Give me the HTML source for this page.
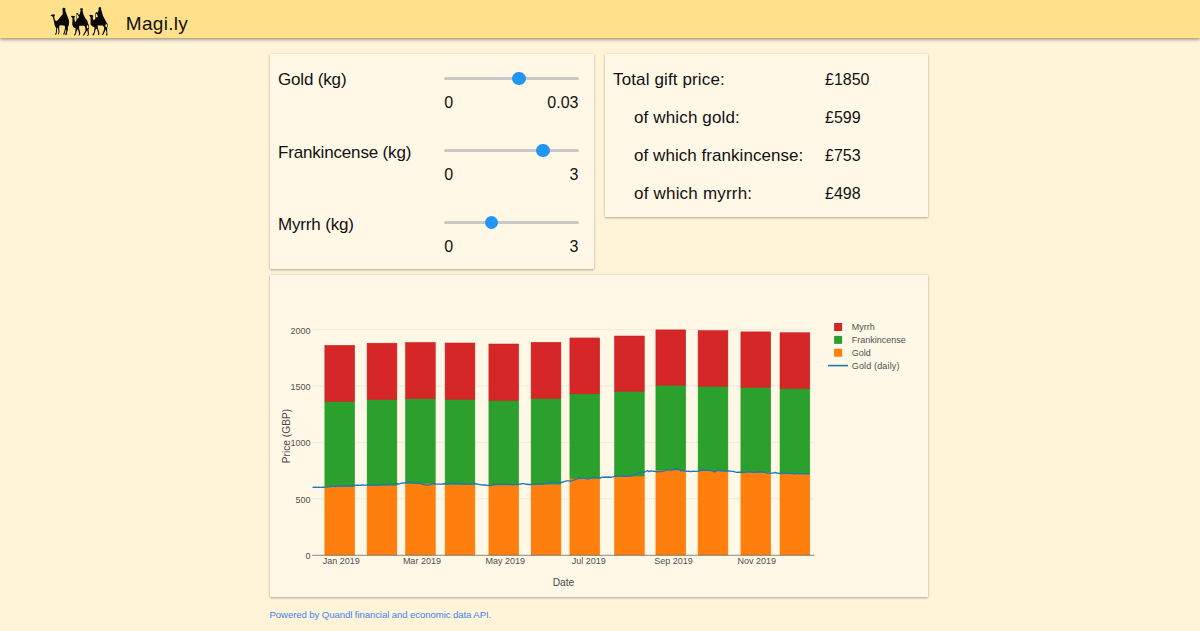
<!DOCTYPE html>
<html><head><meta charset="utf-8"><title>Magi.ly</title>
<style>
html,body{margin:0;padding:0}
body{width:1200px;height:631px;overflow:hidden;background:#fff4d8;font-family:"Liberation Sans",sans-serif;color:#111;position:relative}
.hdr{position:absolute;left:0;top:0;width:1200px;height:38px;background:#ffe18c;box-shadow:0 1px 3px rgba(0,0,0,.35),0 2px 5px rgba(0,0,0,.15)}
.brand{position:absolute;left:125.8px;top:0;height:38px;line-height:48px;font-size:19px;letter-spacing:.3px;color:#111;white-space:nowrap}
.card{position:absolute;background:#fff8e6;box-shadow:0 1px 2px rgba(0,0,0,.27),0 0 3px rgba(0,0,0,.09);border-radius:0}
.lbl{position:absolute;font-size:17px;line-height:20px;white-space:nowrap;color:#111}
.num{position:absolute;font-size:16px;line-height:20px;white-space:nowrap;color:#111}
.track{position:absolute;left:444px;width:135px;height:3px;border-radius:2px;background:#c8c8c6}
.thumb{position:absolute;width:13.4px;height:13.4px;border-radius:50%;background:#2196f3}
.foot{position:absolute;left:269.5px;top:608px;font-size:9.6px;letter-spacing:-.09px;line-height:14px;color:#4285f4;white-space:nowrap;text-decoration:none}
svg text.t{font-family:"Liberation Sans",sans-serif;font-size:9px;fill:#505050}
svg text.a{font-family:"Liberation Sans",sans-serif;font-size:10.2px;fill:#4a4a4a}
</style></head><body>
<div class="hdr">
<svg style="position:absolute;left:48px;top:4px" width="64" height="34" viewBox="0 0 1188 631"><g fill="#0a0805">
<!-- camel 1 -->
<path d="M45 212 L60 200 L118 192 L128 205 L122 225 L114 232 L126 290 L150 322 L185 298 L250 215 L272 190 L272 110 L266 88 L285 70 L315 75 L324 98 L320 120 L345 185 L385 290 L392 350 L384 400 L368 428 L372 470 L356 520 L348 572 L318 582 L324 556 L340 500 L334 462 L314 540 L304 566 L280 566 L304 500 L318 425 L302 397 L215 394 L206 440 L214 520 L202 560 L184 560 L196 520 L186 450 L172 440 L164 530 L152 570 L128 572 L146 530 L152 450 L137 420 L121 390 L112 330 L90 240 L70 224 Z"/>
<!-- camel 2 -->
<path d="M425 232 L440 218 L495 222 L500 240 L488 255 L492 300 L515 335 L530 290 L530 165 L560 170 L565 200 L590 190 L605 120 L595 85 L640 78 L650 95 L640 120 L660 200 L690 260 L730 310 L745 365 L760 400 L765 440 L752 480 L760 560 L742 595 L724 590 L742 560 L730 485 L702 525 L672 582 L644 590 L654 570 L694 490 L692 430 L670 402 L580 402 L577 450 L600 540 L590 580 L564 585 L579 555 L556 465 L534 500 L512 572 L484 590 L484 575 L504 540 L514 450 L470 430 L450 380 L455 260 L440 245 Z"/>
<path d="M538 195 L552 198 L575 240 L560 265 L540 275 Z" fill="#ffe18c"/>
<path d="M722 395 L745 400 L752 435 L738 455 L722 440 Z" fill="#ffe18c"/>
<!-- camel 3 -->
<path d="M765 210 L785 200 L835 208 L842 222 L830 240 L835 285 L855 300 L880 270 L880 165 L905 150 L925 160 L940 110 L938 70 L960 55 L985 65 L985 95 L1000 150 L1020 220 L1060 290 L1085 340 L1105 370 L1112 410 L1097 440 L1100 540 L1105 575 L1082 590 L1077 570 L1087 540 L1074 475 L1047 525 L1022 576 L994 576 L1014 545 L1044 470 L1037 420 L1010 397 L920 397 L925 440 L955 540 L950 576 L924 576 L934 545 L906 455 L884 472 L864 545 L852 578 L824 578 L834 550 L854 520 L864 430 L820 415 L790 380 L790 250 L775 228 Z"/>
<path d="M892 185 L905 180 L925 230 L905 250 L890 240 Z" fill="#ffe18c"/>
<path d="M1065 385 L1092 370 L1102 410 L1085 430 L1065 420 Z" fill="#ffe18c"/>
</g>
</svg>
<div class="brand">Magi.ly</div>
</div>

<div class="card" style="left:270.1px;top:54.1px;width:323.8px;height:215px"></div>
<div class="card" style="left:604.6px;top:54.1px;width:323.8px;height:162.8px"></div>
<div class="card" style="left:270.1px;top:275px;width:658.2px;height:321.8px"></div>

<div class="lbl" style="left:278px;top:70px;letter-spacing:-.17px">Gold (kg)</div>
<div class="lbl" style="left:278px;top:142.6px;letter-spacing:-.17px">Frankincense (kg)</div>
<div class="lbl" style="left:278px;top:215px;letter-spacing:-.17px">Myrrh (kg)</div>

<div class="track" style="top:77px"></div><div class="thumb" style="left:512.2px;top:71.6px"></div>
<div class="track" style="top:149px"></div><div class="thumb" style="left:536.3px;top:143.9px"></div>
<div class="track" style="top:221px"></div><div class="thumb" style="left:484.7px;top:216.1px"></div>

<div class="num" style="left:444.3px;top:93px">0</div><div class="num" style="right:621.5px;top:93px">0.03</div>
<div class="num" style="left:444.3px;top:165px">0</div><div class="num" style="right:621.5px;top:165px">3</div>
<div class="num" style="left:444.3px;top:237px">0</div><div class="num" style="right:621.5px;top:237px">3</div>

<div class="lbl" style="left:613px;top:70px;letter-spacing:0.13px">Total gift price:</div><div class="num" style="left:825px;top:70px">£1850</div>
<div class="lbl" style="left:634px;top:108px;letter-spacing:0.14px">of which gold:</div><div class="num" style="left:825px;top:108px">£599</div>
<div class="lbl" style="left:634px;top:146px;letter-spacing:0.05px">of which frankincense:</div><div class="num" style="left:825px;top:146px">£753</div>
<div class="lbl" style="left:634px;top:184px;letter-spacing:0.2px">of which myrrh:</div><div class="num" style="left:825px;top:184px">£498</div>

<svg style="position:absolute;left:0;top:0" width="1200" height="631" viewBox="0 0 1200 631">
<line x1="312.5" x2="814.5" y1="329.7" y2="329.7" stroke="#f0eadc" stroke-width="1"/>
<line x1="312.5" x2="814.5" y1="386.0" y2="386.0" stroke="#f0eadc" stroke-width="1"/>
<line x1="312.5" x2="814.5" y1="442.4" y2="442.4" stroke="#f0eadc" stroke-width="1"/>
<line x1="312.5" x2="814.5" y1="498.8" y2="498.8" stroke="#f0eadc" stroke-width="1"/>
<rect x="324.85" y="486.3" width="29.8" height="68.70" fill="#ff7f0e" stroke="#ff7300" stroke-width="0.5"/>
<rect x="324.85" y="401.4" width="29.8" height="84.90" fill="#2ca02c" stroke="#1f9a1f" stroke-width="0.5"/>
<rect x="324.85" y="345.35" width="29.8" height="56.05" fill="#d62728" stroke="#cf1316" stroke-width="0.5"/>
<rect x="367.10" y="485.3" width="29.8" height="69.70" fill="#ff7f0e" stroke="#ff7300" stroke-width="0.5"/>
<rect x="367.10" y="399.5" width="29.8" height="85.80" fill="#2ca02c" stroke="#1f9a1f" stroke-width="0.5"/>
<rect x="367.10" y="343.2" width="29.8" height="56.30" fill="#d62728" stroke="#cf1316" stroke-width="0.5"/>
<rect x="405.50" y="483.3" width="29.8" height="71.70" fill="#ff7f0e" stroke="#ff7300" stroke-width="0.5"/>
<rect x="405.50" y="398.6" width="29.8" height="84.70" fill="#2ca02c" stroke="#1f9a1f" stroke-width="0.5"/>
<rect x="405.50" y="342.5" width="29.8" height="56.10" fill="#d62728" stroke="#cf1316" stroke-width="0.5"/>
<rect x="445.10" y="484.5" width="29.8" height="70.50" fill="#ff7f0e" stroke="#ff7300" stroke-width="0.5"/>
<rect x="445.10" y="399.3" width="29.8" height="85.20" fill="#2ca02c" stroke="#1f9a1f" stroke-width="0.5"/>
<rect x="445.10" y="343.0" width="29.8" height="56.30" fill="#d62728" stroke="#cf1316" stroke-width="0.5"/>
<rect x="488.90" y="485.0" width="29.8" height="70.00" fill="#ff7f0e" stroke="#ff7300" stroke-width="0.5"/>
<rect x="488.90" y="400.3" width="29.8" height="84.70" fill="#2ca02c" stroke="#1f9a1f" stroke-width="0.5"/>
<rect x="488.90" y="344.0" width="29.8" height="56.30" fill="#d62728" stroke="#cf1316" stroke-width="0.5"/>
<rect x="531.10" y="484.2" width="29.8" height="70.80" fill="#ff7f0e" stroke="#ff7300" stroke-width="0.5"/>
<rect x="531.10" y="398.4" width="29.8" height="85.80" fill="#2ca02c" stroke="#1f9a1f" stroke-width="0.5"/>
<rect x="531.10" y="342.3" width="29.8" height="56.10" fill="#d62728" stroke="#cf1316" stroke-width="0.5"/>
<rect x="569.90" y="478.3" width="29.8" height="76.70" fill="#ff7f0e" stroke="#ff7300" stroke-width="0.5"/>
<rect x="569.90" y="393.8" width="29.8" height="84.50" fill="#2ca02c" stroke="#1f9a1f" stroke-width="0.5"/>
<rect x="569.90" y="337.95" width="29.8" height="55.85" fill="#d62728" stroke="#cf1316" stroke-width="0.5"/>
<rect x="614.50" y="476.0" width="29.8" height="79.00" fill="#ff7f0e" stroke="#ff7300" stroke-width="0.5"/>
<rect x="614.50" y="391.2" width="29.8" height="84.80" fill="#2ca02c" stroke="#1f9a1f" stroke-width="0.5"/>
<rect x="614.50" y="336.0" width="29.8" height="55.20" fill="#d62728" stroke="#cf1316" stroke-width="0.5"/>
<rect x="655.90" y="470.0" width="29.8" height="85.00" fill="#ff7f0e" stroke="#ff7300" stroke-width="0.5"/>
<rect x="655.90" y="385.2" width="29.8" height="84.80" fill="#2ca02c" stroke="#1f9a1f" stroke-width="0.5"/>
<rect x="655.90" y="329.9" width="29.8" height="55.30" fill="#d62728" stroke="#cf1316" stroke-width="0.5"/>
<rect x="698.10" y="470.8" width="29.8" height="84.20" fill="#ff7f0e" stroke="#ff7300" stroke-width="0.5"/>
<rect x="698.10" y="386.3" width="29.8" height="84.50" fill="#2ca02c" stroke="#1f9a1f" stroke-width="0.5"/>
<rect x="698.10" y="330.6" width="29.8" height="55.70" fill="#d62728" stroke="#cf1316" stroke-width="0.5"/>
<rect x="740.90" y="472.2" width="29.8" height="82.80" fill="#ff7f0e" stroke="#ff7300" stroke-width="0.5"/>
<rect x="740.90" y="387.3" width="29.8" height="84.90" fill="#2ca02c" stroke="#1f9a1f" stroke-width="0.5"/>
<rect x="740.90" y="331.9" width="29.8" height="55.40" fill="#d62728" stroke="#cf1316" stroke-width="0.5"/>
<rect x="780.00" y="473.3" width="29.8" height="81.70" fill="#ff7f0e" stroke="#ff7300" stroke-width="0.5"/>
<rect x="780.00" y="388.4" width="29.8" height="84.90" fill="#2ca02c" stroke="#1f9a1f" stroke-width="0.5"/>
<rect x="780.00" y="332.75" width="29.8" height="55.65" fill="#d62728" stroke="#cf1316" stroke-width="0.5"/>
<polyline fill="none" stroke="#1f77b4" stroke-width="1.35" stroke-linejoin="round" points="312.5,487.3 314.1,487.21 315.6,487.13 317.2,487.38 318.8,487.09 320.3,487.32 321.9,487.23 323.4,487.08 325.0,487.3 326.5,487.17 328.0,486.8 329.6,486.86 331.1,486.54 332.6,486.41 334.1,486.44 335.6,486.51 337.1,486.02 338.7,485.93 340.2,486.0 341.7,485.8 343.1,486.02 344.6,485.84 346.1,485.75 347.5,486.04 348.9,485.57 350.4,485.98 351.9,485.69 353.3,485.8 355.0,485.46 356.7,485.29 358.3,485.22 360.0,485.32 361.7,485.0 363.1,484.88 364.6,485.12 366.1,485.18 367.5,485.09 368.9,485.21 370.4,485.01 371.9,485.04 373.3,485.3 374.7,485.04 376.2,485.16 377.6,484.92 379.0,484.75 380.4,484.77 381.9,484.59 383.3,484.5 384.8,484.33 386.3,484.5 387.9,484.38 389.4,484.08 390.9,484.17 392.4,484.08 393.9,484.18 395.4,484.03 397.0,483.74 398.5,484.01 400.0,483.7 401.7,483.17 403.3,482.98 405.0,482.81 406.6,482.17 408.3,482.0 410.0,482.25 411.7,482.29 413.3,482.86 415.0,483.17 416.7,483.3 418.4,483.34 420.0,483.3 421.7,483.99 423.4,484.21 425.0,484.9 426.7,485.3 428.4,484.95 430.0,484.54 431.6,484.08 433.3,483.7 435.0,483.99 436.6,484.17 438.3,484.06 440.0,484.2 441.5,484.18 443.0,483.78 444.4,484.0 445.9,483.87 447.4,483.95 448.9,483.76 450.3,483.39 451.8,483.34 453.3,483.3 454.7,483.51 456.2,483.32 457.6,483.67 459.0,483.65 460.4,483.75 461.9,483.85 463.3,484.2 464.8,484.27 466.2,483.89 467.7,483.89 469.1,483.9 470.6,484.07 472.1,483.62 473.5,483.74 475.0,483.7 476.7,483.98 478.3,484.41 480.0,484.64 481.6,484.92 483.3,485.0 485.0,485.01 486.6,485.21 488.3,485.3 490.0,485.5 491.7,485.39 493.4,485.13 495.0,484.43 496.7,484.3 498.2,484.16 499.7,484.2 501.1,484.22 502.6,484.37 504.1,484.44 505.6,484.29 507.1,484.18 508.6,484.4 510.0,484.4 511.5,484.51 513.0,484.5 514.6,484.61 516.1,484.37 517.7,484.16 519.3,484.1 520.9,484.02 522.4,483.59 524.0,483.7 525.5,484.1 527.0,484.24 528.5,484.49 530.0,484.5 531.4,484.62 532.9,484.38 534.3,484.35 535.8,484.17 537.2,484.4 538.7,484.08 540.1,484.05 541.6,484.09 543.0,484.2 544.4,483.65 545.8,483.36 547.2,482.84 548.6,482.43 550.0,482.3 551.5,482.15 552.9,482.15 554.4,482.31 555.9,482.16 557.3,482.61 558.8,482.51 560.2,482.3 561.7,482.5 563.4,481.81 565.0,481.29 566.7,480.8 568.8,480.93 570.8,481.2 572.5,480.34 574.1,480.04 575.8,479.2 577.2,478.98 578.6,478.25 580.0,477.8 581.7,478.07 583.3,478.15 585.0,478.44 586.6,478.84 588.3,479.2 590.0,478.45 591.6,478.1 593.3,477.3 595.0,477.31 596.6,477.41 598.3,478.05 600.0,478.0 602.5,477.2 604.0,477.21 605.6,477.02 607.1,477.22 608.6,476.96 610.2,477.21 611.7,477.2 613.4,476.94 615.0,476.2 616.5,476.38 618.0,476.3 619.5,476.08 621.0,476.13 622.5,476.03 624.0,476.34 625.5,476.22 627.0,476.34 628.5,476.11 630.0,476.2 631.4,475.53 632.9,475.3 634.3,474.86 635.7,474.26 637.1,473.71 638.6,473.19 640.0,472.5 641.7,472.45 643.3,472.03 645.0,472.0 647.5,470.5 649.0,471.7 650.8,470.8 652.3,471.06 653.8,471.23 655.2,471.31 656.7,471.8 658.4,471.53 660.0,471.62 661.7,471.7 663.2,471.08 664.6,470.8 666.0,470.43 667.5,469.7 669.0,469.62 670.4,469.82 671.8,469.79 673.3,469.5 674.7,469.49 676.1,468.97 677.5,468.8 679.0,469.3 680.8,470.7 682.3,470.71 683.8,470.86 685.2,471.0 686.7,471.3 688.2,471.14 689.6,471.34 691.0,471.46 692.5,471.42 694.0,471.23 695.4,471.3 696.8,471.36 698.3,471.2 700.0,470.53 701.6,470.35 703.3,469.8 705.0,469.95 706.7,469.7 708.4,470.17 710.0,470.49 711.7,470.7 714.5,471.8 716.0,471.14 717.5,470.5 719.0,470.42 720.6,470.81 722.1,470.67 723.6,470.98 725.2,471.15 726.7,471.0 728.4,471.02 730.0,471.1 731.6,471.45 733.3,471.3 735.0,471.91 736.7,472.3 738.4,472.19 740.0,472.21 741.6,472.28 743.3,472.5 745.0,472.44 746.6,472.12 748.3,471.7 750.0,471.65 751.6,472.11 753.3,472.32 755.0,472.2 756.7,472.11 758.3,471.79 760.0,471.7 761.7,472.0 763.4,472.07 765.0,472.28 766.7,472.8 768.4,473.14 770.0,473.07 771.6,473.11 773.3,473.2 775.0,472.5 776.7,473.02 778.4,473.07 780.0,473.59 781.7,473.7 783.3,473.0 785.0,473.34 786.6,473.21 788.3,473.4 790.0,473.7 791.4,473.6 792.9,473.57 794.3,473.74 795.7,473.58 797.1,473.66 798.6,473.52 800.0,473.91 801.4,473.63 802.9,473.68 804.3,473.74 805.7,473.9 807.1,473.66 808.6,473.91 810,473.7"/>
<line x1="312.2" x2="814.5" y1="555.3" y2="555.3" stroke="#6b6b66" stroke-width="0.8"/>
<text x="341.3" y="564.4" text-anchor="middle" class="t">Jan 2019</text>
<text x="421.9" y="564.4" text-anchor="middle" class="t">Mar 2019</text>
<text x="505.3" y="564.4" text-anchor="middle" class="t">May 2019</text>
<text x="588.7" y="564.4" text-anchor="middle" class="t">Jul 2019</text>
<text x="673.4" y="564.4" text-anchor="middle" class="t">Sep 2019</text>
<text x="756.8" y="564.4" text-anchor="middle" class="t">Nov 2019</text>
<text x="310.5" y="333.6" text-anchor="end" class="t">2000</text>
<text x="310.5" y="389.9" text-anchor="end" class="t">1500</text>
<text x="310.5" y="446.3" text-anchor="end" class="t">1000</text>
<text x="310.5" y="502.7" text-anchor="end" class="t">500</text>
<text x="310.5" y="559.2" text-anchor="end" class="t">0</text>
<text x="563.5" y="586.3" text-anchor="middle" class="a">Date</text>
<text transform="translate(289.5,436) rotate(-90)" text-anchor="middle" class="a">Price (GBP)</text>
<rect x="834.1" y="323.00" width="8" height="8" fill="#d62728"/>
<text x="851.8" y="330.2" class="t">Myrrh</text>
<rect x="834.1" y="335.90" width="8" height="8" fill="#2ca02c"/>
<text x="851.8" y="343.1" class="t">Frankincense</text>
<rect x="834.1" y="348.75" width="8" height="8" fill="#ff7f0e"/>
<text x="851.8" y="355.9" class="t">Gold</text>
<line x1="828" x2="848" y1="365.6" y2="365.6" stroke="#1f77b4" stroke-width="1.6"/>
<text x="851.8" y="368.8" class="t" style="letter-spacing:.15px">Gold (daily)</text>
</svg>
<a class="foot">Powered by Quandl financial and economic data API.</a>
</body></html>
